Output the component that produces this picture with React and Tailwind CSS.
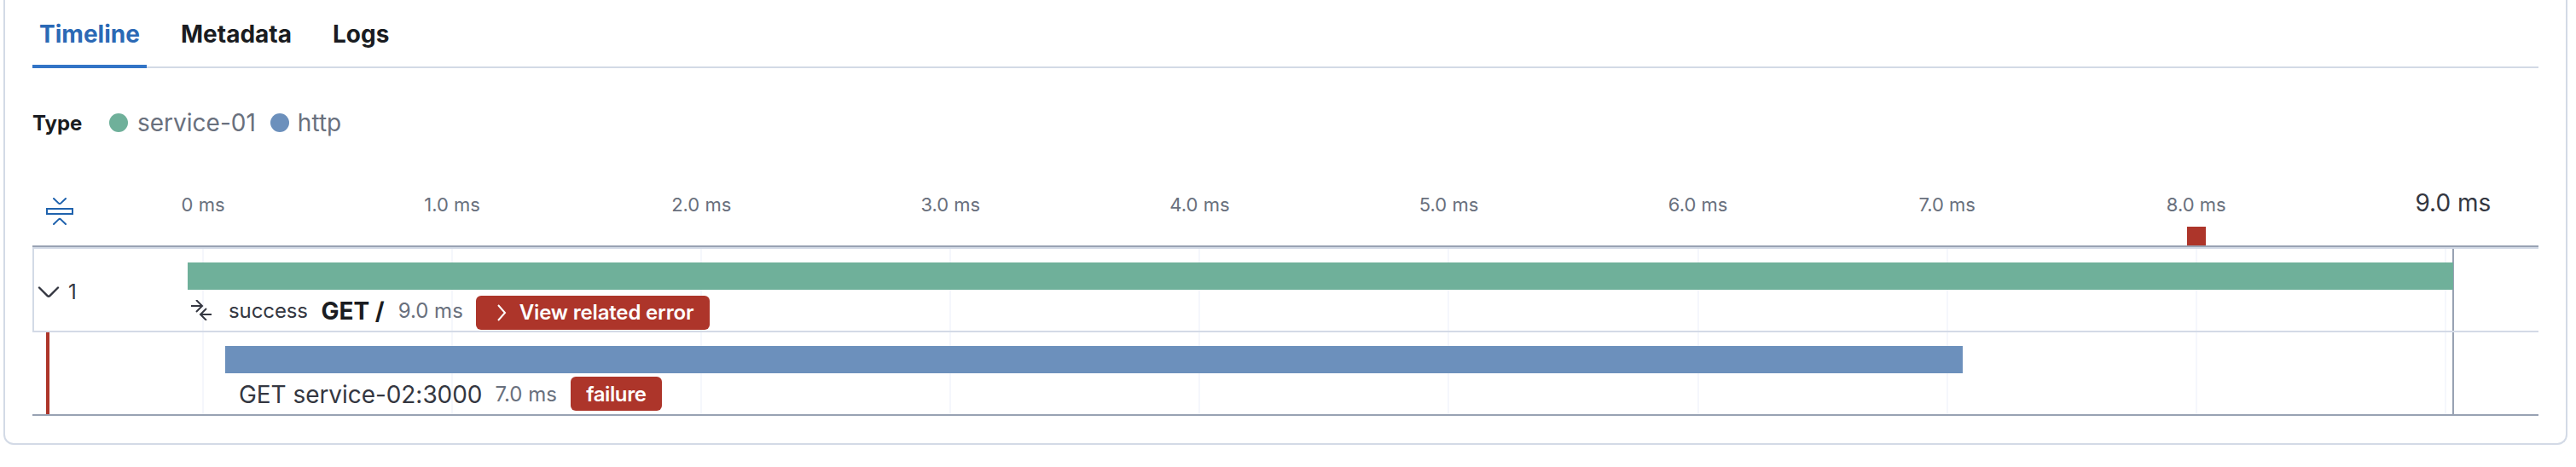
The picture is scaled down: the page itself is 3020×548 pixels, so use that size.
const TICKS = ['0 ms', '1.0 ms', '2.0 ms', '3.0 ms', '4.0 ms', '5.0 ms', '6.0 ms', '7.0 ms', '8.0 ms'];

function Axis() {
  return (
    <div className="flex h-[86px] border-b-2 border-[#98a2b3] pt-4">
      <div className="w-[54px] shrink-0 pl-4 pt-3">
        <svg className="block" width="32" height="32" viewBox="0 0 32 32" fill="none" stroke="#1f62ad" strokeWidth="2">
          <path d="M9 1l5.6 5.4c.8.8 2 .8 2.8 0L23 1" strokeLinecap="round" />
          <path d="M1 13h30v6H1z" />
          <path d="M9 31l5.6-5.4c.8-.8 2-.8 2.8 0L23 31" strokeLinecap="round" />
        </svg>
      </div>
      <div className="flex">
        {TICKS.map((label) => (
          <div key={label} className="w-[292.1px] pt-[5px] text-center text-[22px] leading-[30px] text-[#69707d]">
            {label}
            {label === '8.0 ms' && <div className="mx-auto mt-[11px] h-[22px] w-[22px] bg-[#ad352a]" />}
          </div>
        ))}
      </div>
      <div className="ml-[75px] w-[160px] pt-px text-center text-[28px] leading-[34px] text-[#343741]">9.0 ms</div>
    </div>
  );
}

function Grid() {
  return (
    <div className="absolute inset-y-0 left-[199px] flex">
      {TICKS.map((label) => (
        <div key={label} className="w-[292.1px] border-l-2 border-[#f5f7fc]" />
      ))}
      <div className="w-[9px] border-l-2 border-[#f5f7fc]" />
      <div className="w-[2px] bg-[#98a2b3]" />
    </div>
  );
}

export default function App() {
  return (
    <div className="h-[548px] w-[3020px] overflow-hidden bg-white px-1 font-['Inter',sans-serif] text-[#343741]">
      <div className="h-[522px] w-[3006px] rounded-b-xl border-x-2 border-b-2 border-[#d3dae6] px-8">
        <div className="flex h-[80px] gap-8 border-b-2 border-[#d3dae6] text-[28px] font-bold leading-[80px] text-[#1a1c21]">
          <div className="h-[80px] w-[134px] border-b-4 border-[#3274c6] text-center text-[#2b69b5]">Timeline</div>
          <div className="px-2">Metadata</div>
          <div className="px-2">Logs</div>
        </div>
        <div className="flex h-[124px] items-center pt-1 text-[28px] text-[#69707d]">
          <span className="w-[90px] pt-px text-[24px] font-bold text-[#1a1c21]">Type</span>
          <span className="mr-[11px] h-[22px] w-[22px] rounded-full bg-[#6fb09a]" />
          <span>service-01</span>
          <span className="ml-[17px] mr-[10px] h-[22px] w-[22px] rounded-full bg-[#6c90bc]" />
          <span>http</span>
        </div>
        <Axis />
        <div className="relative h-[198px] border-b-2 border-[#98a2b3]">
          <Grid />
          <div className="relative h-[100px] border-y-2 border-l-2 border-[#d3dae6]">
            <div className="flex">
              <div className="flex w-[180px] items-center gap-[10px] pl-1 pt-1 text-[24px]">
                <svg width="26" height="14" viewBox="0 0 26 14" fill="none" stroke="#343741" strokeWidth="2.4" strokeLinecap="round">
                  <path d="M2 1.5l9.6 9.6c.8.8 2 .8 2.8 0L24 1.5" />
                </svg>
                <span>1</span>
              </div>
              <div className="pt-4">
                <div className="h-8 w-[2656px] bg-[#6fb09a]" />
                <div className="flex h-[50px] items-center pl-1 text-[24px]">
                  <svg className="-mt-[2px]" width="24" height="24" viewBox="0 0 24 24" fill="none" stroke="#343741" strokeWidth="2">
                    <path d="M0 7h13M6 0l7 7-7 7M24 17H11M18 10l-7 7 7 7" />
                  </svg>
                  <span className="ml-5 tracking-[-0.1px]">success</span>
                  <span className="ml-[15.5px] text-[28px] font-bold text-[#1a1c21]">GET /</span>
                  <span className="ml-4 text-[#69707d]">9.0 ms</span>
                  <span className="ml-[15px] mt-1 flex h-10 w-[274px] items-center rounded-md bg-[#ad352a] pl-6 font-semibold tracking-[-0.17px] text-white">
                    <svg className="mr-[15px]" width="12" height="20" viewBox="0 0 12 20" fill="none" stroke="white" strokeWidth="2">
                      <path d="M2 1l8 9-8 9" />
                    </svg>
                    View related error
                  </span>
                </div>
              </div>
            </div>
          </div>
          <div className="relative flex h-[96px]">
            <div className="ml-4 h-full w-1 bg-[#ad352a]" />
            <div className="ml-[206px] pt-4">
              <div className="h-8 w-[2037px] bg-[#6c90bc]" />
              <div className="flex h-[48px] items-center pl-4 text-[24px]">
                <span className="pt-[2px] text-[28px] tracking-[-0.06px]">GET service-02:3000</span>
                <span className="ml-[15px] pt-[2px] text-[#69707d]">7.0 ms</span>
                <span className="ml-4 flex h-10 w-[107px] items-center justify-center rounded-md bg-[#ad352a] pt-[2px] font-semibold tracking-[-0.4px] text-white">failure</span>
              </div>
            </div>
          </div>
        </div>
      </div>
    </div>
  );
}
